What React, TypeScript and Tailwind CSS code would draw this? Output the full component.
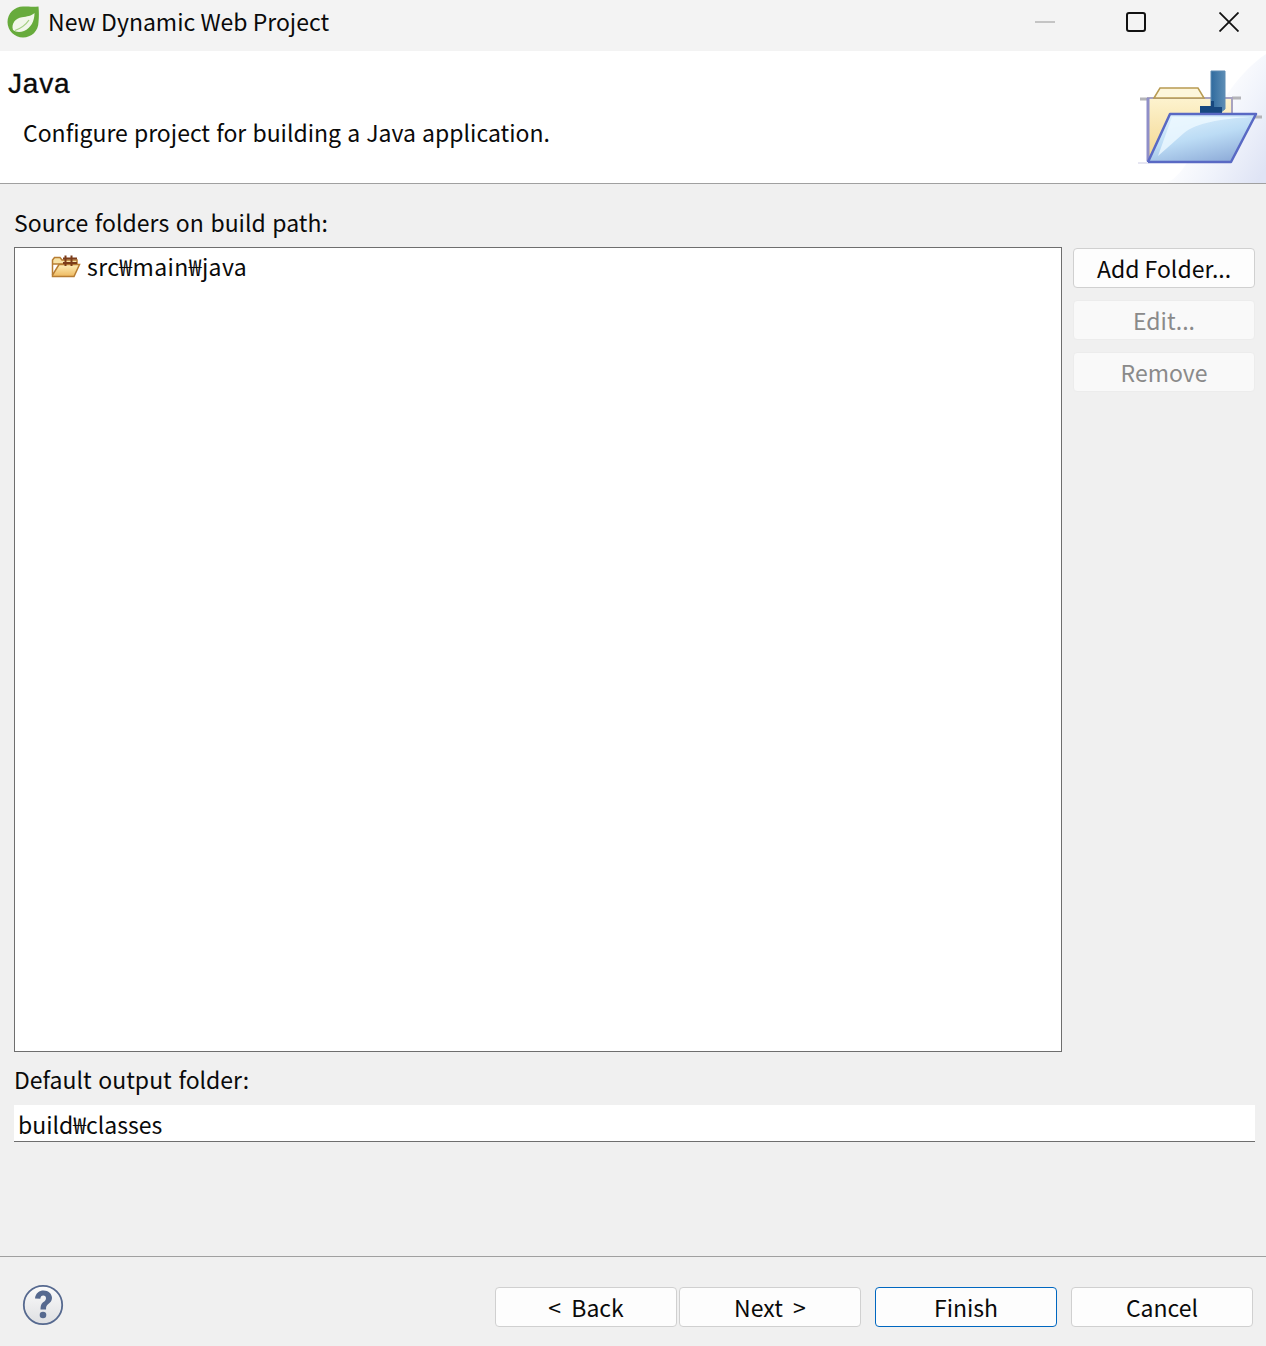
import React from "react";

const font = { fontFamily: '"Noto Sans CJK KR", "Noto Sans", sans-serif' };

function SpringIcon() {
  return (
    <svg width="32" height="32" viewBox="0 0 32 32" className="shrink-0">
      <path d="M16 0.500C22 0.500 26 1 31.500 0.500C32 6 32 11 31.500 16C31.500 25 24.500 31.500 16 31.500C7.500 31.500 0.500 24.500 0.500 16C0.500 7.500 7.500 0.500 16 0.500Z" fill="#67ab3c" />
      <path d="M27.500 7C27.500 15 24 22 17 25C12.500 26.800 8.500 26 6 24C4 17.500 8.500 12.500 15 11.300C20 10.400 24.500 10 27.500 7Z" fill="#f1f6ea" />
      <path d="M8 24.500C12 23 18 20 22 14" stroke="#a5cf85" strokeWidth="1.300" fill="none" />
    </svg>
  );
}

function BannerIcon() {
  return (
    <svg width="130" height="132" viewBox="0 0 130 132" className="shrink-0 block">
      <defs>
        <linearGradient id="bg" gradientUnits="userSpaceOnUse" x1="50" y1="80" x2="125" y2="125">
          <stop offset="0" stopColor="#ffffff" />
          <stop offset="0.5" stopColor="#f0f3fb" />
          <stop offset="1" stopColor="#dfe4f5" />
        </linearGradient>
        <linearGradient id="back" x1="0" y1="0" x2="0" y2="1">
          <stop offset="0" stopColor="#fdf3cf" />
          <stop offset="1" stopColor="#f3d68e" />
        </linearGradient>
        <linearGradient id="front" x1="0.2" y1="0" x2="0.7" y2="1">
          <stop offset="0" stopColor="#e0f2fe" />
          <stop offset="0.5" stopColor="#bcdcf5" />
          <stop offset="1" stopColor="#8fadd9" />
        </linearGradient>
        <linearGradient id="j" x1="0" y1="0" x2="1" y2="0">
          <stop offset="0" stopColor="#2f6a9e" />
          <stop offset="1" stopColor="#5d8db5" />
        </linearGradient>
      </defs>
      <path d="M130 3V132H30C60 122 75 40 130 3Z" fill="url(#bg)" />
      <path d="M4 48H12M96 47H105M14 68H21M118 66H126" stroke="#b4b4b8" strokeWidth="3" />
      <path d="M12 110V47H96V70H34L12 110Z" fill="url(#back)" stroke="#a8a3c0" strokeWidth="2" />
      <path d="M18 47L24 37H62L68 47Z" fill="#fdf6dc" stroke="#b89b52" strokeWidth="1.500" />
      <path d="M12 47V110" stroke="#8f8fc8" strokeWidth="3" />
      <path d="M75 20H89V58L84 62H75Z" fill="url(#j)" stroke="#5f8bb3" strokeWidth="1" />
      <path d="M64 55H75V50H78V56H86V63H64Z" fill="#17487f" />
      <path d="M34 63H120L95 111H12Z" fill="url(#front)" stroke="#5969c4" strokeWidth="2.500" strokeLinejoin="round" />
      <path d="M36 66H114C85 68 60 72 48 82L22 105Z" fill="#eef9ff" opacity="0.8" />
      <path d="M2 112H12" stroke="#e6e6f2" strokeWidth="2" />
    </svg>
  );
}

function FolderIcon() {
  return (
    <svg width="30" height="24" viewBox="0 0 30 24" className="shrink-0">
      <defs>
        <linearGradient id="fo" x1="0" y1="0" x2="0" y2="1">
          <stop offset="0" stopColor="#fdeeb8" />
          <stop offset="1" stopColor="#eeb95f" />
        </linearGradient>
      </defs>
      <path d="M1.500 21V6L3.500 3.500H9L11 6H26V10H1.500" fill="#f7e2a6" stroke="#b77d33" strokeWidth="1.500" />
      <path d="M8 10.500H28.500L23 22.500H1.500V21Z" fill="url(#fo)" stroke="#b77d33" strokeWidth="1.500" />
      <path d="M14.500 1.500V12M20.500 1.500V12M12 4.500H26M12 9H26" stroke="#7c3d1a" strokeWidth="2" />
    </svg>
  );
}

function HelpIcon() {
  return (
    <svg width="42" height="42" viewBox="0 0 42 42" className="shrink-0">
      <defs>
        <linearGradient id="h" x1="0" y1="0" x2="0" y2="1">
          <stop offset="0" stopColor="#fbfbfb" />
          <stop offset="1" stopColor="#dedfe2" />
        </linearGradient>
      </defs>
      <circle cx="21" cy="21" r="19.200" fill="url(#h)" stroke="#56698f" strokeWidth="1.800" />
      <path d="M13 14.500C13.500 9 17.500 6.500 21.500 6.500C26.500 6.500 30 10 30 14C30 17 28 18.800 26 20.300C24.500 21.500 24 22.500 24 25.500H18.500C18.500 21 19.500 19.500 21.500 18C23.200 16.800 24 15.800 24 14.200C24 12.500 23 11.500 21.300 11.500C19.500 11.500 18.500 12.700 18.300 14.800Z" fill="#56698f" />
      <circle cx="21" cy="31" r="3.300" fill="#56698f" />
    </svg>
  );
}

function Btn({ label, variant }: { label: string; variant?: "focus" | "disabled" }) {
  const cls =
    variant === "disabled"
      ? "border-[#ececec] bg-[#f9f9f9] text-[#8a8a8a]"
      : variant === "focus"
        ? "border-[#0067c0] bg-[#fdfdfd] text-[#0a0a0a]"
        : "border-[#d0d0d0] bg-[#fdfdfd] text-[#0a0a0a]";
  return (
    <div className={`flex h-10 w-[182px] items-center justify-center rounded-[4px] border pt-px text-[23px] leading-none whitespace-pre ${cls}`}>
      {label}
    </div>
  );
}

export default function App() {
  return (
    <div className="flex h-[1346px] w-[1266px] flex-col overflow-hidden bg-[#f0f0f0] text-[#0a0a0a]" style={font}>
      <div className="flex h-[51px] shrink-0 items-center bg-[#f3f3f3] pb-2 pl-[7px]">
        <SpringIcon />
        <span className="ml-[9px] text-[23px] leading-none">New Dynamic Web Project</span>
        <div className="ml-auto flex items-center pr-[27px]">
          <svg width="20" height="20" viewBox="0 0 20 20" className="mr-[71px]">
            <path d="M0 10H20" stroke="#c4c4c4" strokeWidth="2" />
          </svg>
          <svg width="20" height="20" viewBox="0 0 20 20" className="mr-[73px]">
            <rect x="1" y="1" width="18" height="18" rx="2" fill="none" stroke="#111" strokeWidth="2" />
          </svg>
          <svg width="20" height="20" viewBox="0 0 20 20">
            <path d="M0.500 0.500L19.500 19.500M19.500 0.500L0.500 19.500" stroke="#111" strokeWidth="1.800" />
          </svg>
        </div>
      </div>

      <div className="flex h-[133px] shrink-0 justify-between border-b border-[#a0a0a0] bg-white">
        <div>
          <div className="mt-[17px] ml-[8px] text-[28px] leading-[32px] tracking-[0.8px] [-webkit-text-stroke:0.3px_#0a0a0a]" style={{ fontFamily: '"Liberation Sans", sans-serif' }}>
            Java
          </div>
          <div className="mt-[16px] ml-[23px] text-[23px] leading-[32px] [word-spacing:1px]">Configure project for building a Java application.</div>
        </div>
        <BannerIcon />
      </div>

      <div className="flex flex-1 flex-col pr-[11px] pl-[14px]">
        <div className="mt-[22px] h-[32px] text-[23px] leading-[32px] [word-spacing:1.500px]">Source folders on build path:</div>
        <div className="mt-[9px] flex gap-[11px]">
          <div className="h-[805px] w-[1048px] border border-[#6e6e6e] bg-white pt-[3px] pl-[36px]">
            <div className="flex items-center">
              <FolderIcon />
              <span className="ml-[6px] text-[23px] leading-[30px] tracking-[0.4px]">src₩main₩java</span>
            </div>
          </div>
          <div className="mt-px flex flex-col gap-3">
            <Btn label="Add Folder..." />
            <Btn label="Edit..." variant="disabled" />
            <Btn label="Remove" variant="disabled" />
          </div>
        </div>
        <div className="mt-[11px] h-[32px] text-[23px] leading-[32px] [word-spacing:1.500px]">Default output folder:</div>
        <div className="mt-[10px] h-[37px] w-[1241px] border-b border-[#6e6e6e] bg-white pl-[4px] text-[23px] leading-[38px]">build₩classes</div>
      </div>

      <div className="flex h-[90px] shrink-0 border-t border-[#a0a0a0] pt-[27px] pl-[22px]">
        <HelpIcon />
        <div className="mt-[3px] ml-auto flex pr-[13px]">
          <Btn label="<  Back" />
          <div className="ml-[2px]"><Btn label="Next  >" /></div>
          <div className="ml-[14px]"><Btn label="Finish" variant="focus" /></div>
          <div className="ml-[14px]"><Btn label="Cancel" /></div>
        </div>
      </div>
    </div>
  );
}
